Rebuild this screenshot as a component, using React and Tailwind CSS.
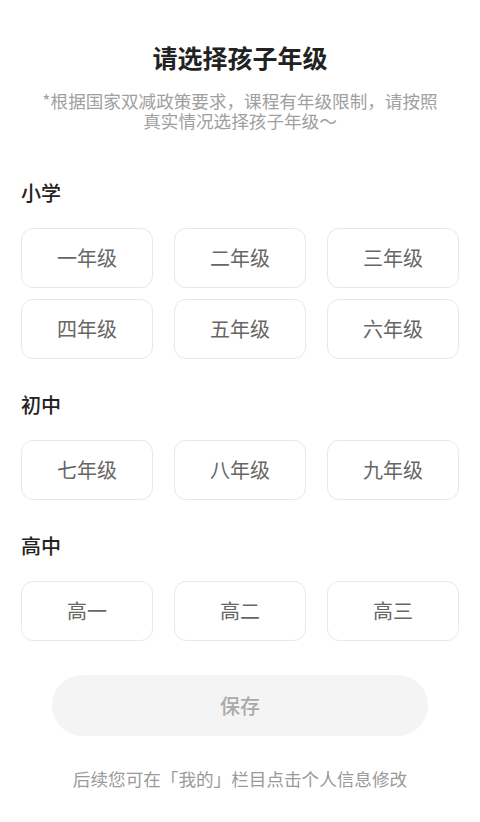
import { useState } from "react";

const FONT = { fontFamily: '"Noto Sans CJK SC", "Noto Sans", sans-serif' };

// Grade groups shown on the page
const groups = [
  { title: "小学", grades: ["一年级", "二年级", "三年级", "四年级", "五年级", "六年级"] },
  { title: "初中", grades: ["七年级", "八年级", "九年级"] },
  { title: "高中", grades: ["高一", "高二", "高三"] },
];

export default function App() {
  const [selected, setSelected] = useState(null);

  return (
    <div className="min-h-[822px] w-[480px] bg-white" style={FONT}>
      <div className="pt-[42px] text-center">
        <h1 className="text-[25px] font-bold leading-[30px] text-[#222]">请选择孩子年级</h1>
        <p className="mx-auto mt-[19px] w-[410px] text-[17.6px] leading-[20px] text-[#a0a0a0]">
          *根据国家双减政策要求，课程有年级限制，请按照真实情况选择孩子年级～
        </p>
      </div>

      <div className="mt-[50px] px-[21px]">
        {groups.map((g) => (
          <div key={g.title} className="mb-[34px]">
            <h2 className="text-[20px] font-medium leading-[24px] text-[#222]">{g.title}</h2>
            <div className="mt-[23px] grid grid-cols-3 gap-x-[21px] gap-y-[11px]">
              {g.grades.map((grade) => (
                <button
                  key={grade}
                  onClick={() => setSelected(grade)}
                  className={`flex h-[60px] items-center justify-center rounded-[12px] border text-[20px] ${
                    selected === grade
                      ? "border-[#ff7a2f] text-[#ff7a2f]"
                      : "border-[#e8e8e8] text-[#666]"
                  }`}
                >
                  {grade}
                </button>
              ))}
            </div>
          </div>
        ))}
      </div>

      <div className="px-[52px]">
        <button className="flex h-[61px] w-full items-center justify-center rounded-full bg-[#f4f4f4] text-[20px] font-medium text-[#aaa]">
          保存
        </button>
      </div>

      <p className="mt-[32px] text-center text-[17.6px] leading-[22px] text-[#9a9a9a]">
        后续您可在「我的」栏目点击个人信息修改
      </p>
    </div>
  );
}
